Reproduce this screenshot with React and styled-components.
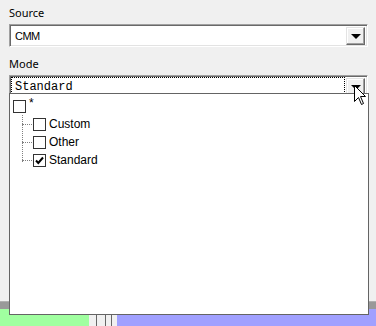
import React from 'react'
import styled, { createGlobalStyle } from 'styled-components'

const Global = createGlobalStyle`
  html, body { margin: 0; padding: 0; }
  body {
    background: #f0f0f0;
    font-family: "Liberation Sans", "DejaVu Sans", sans-serif;
    font-size: 12px;
    color: #000;
  }
`

const Page = styled.div`
  position: relative;
  width: 376px;
  height: 326px;
  overflow: hidden;
  display: flex;
  flex-direction: column;
`

const Form = styled.div`
  display: flex;
  flex-direction: column;
  padding: 5px 8px 0 9px;
  flex: 1;
`

const Label = styled.div`
  font-family: "Noto Sans", "DejaVu Sans", sans-serif;
  font-size: 11px;
  line-height: 15px;
  height: 15px;
  margin-top: ${p => p.top || 0}px;
  margin-bottom: 4px;
`

const Combo = styled.div`
  position: relative;
  height: 23px;
  box-sizing: border-box;
  background: #fff;
  border-top: 1px solid #a0a0a0;
  border-left: 1px solid #a0a0a0;
  border-right: 1px solid #fff;
  border-bottom: 1px solid #fff;
  box-shadow: inset 1px 1px 0 #696969, inset -1px -1px 0 #e3e3e3;
  display: flex;
  align-items: center;
  padding: 2px;
`

const Value = styled.div`
  flex: 1;
  height: 17px;
  box-sizing: border-box;
  display: flex;
  align-items: center;
  padding-left: 3px;
  font-family: ${p => p.mono ? '"Liberation Mono", monospace' : '"Liberation Sans", sans-serif'};
  font-size: ${p => p.mono ? 12 : 11}px;
  letter-spacing: ${p => p.mono ? 0 : -0.5}px;
  outline: ${p => p.focus ? '1px dotted #000' : 'none'};
  margin-right: 2px;
`

const DropButton = styled.div`
  width: 19px;
  height: 18px;
  box-sizing: border-box;
  background: #f0f0f0;
  border-top: 1px solid #e3e3e3;
  border-left: 1px solid #e3e3e3;
  border-right: 1px solid #696969;
  border-bottom: 1px solid #696969;
  box-shadow: inset -1px -1px 0 #a0a0a0, inset 1px 1px 0 #fff;
  display: flex;
  align-items: center;
  justify-content: center;
  &::after {
    content: '';
    width: 0;
    height: 0;
    border-left: 5px solid transparent;
    border-right: 5px solid transparent;
    border-top: 5px solid #000;
    margin-top: 1px;
  }
`

const Popup = styled.div`
  position: absolute;
  left: 9px;
  top: 93px;
  width: 360px;
  height: 222px;
  box-sizing: border-box;
  background: #fff;
  border: 1px solid #646464;
  padding-top: 3px;
  z-index: 2;
`

const Row = styled.div`
  position: relative;
  height: 18px;
  display: flex;
  align-items: center;
  padding-left: ${p => p.indent ? 23 : 3}px;
`

const Branch = styled.div`
  width: 10px;
  height: 0;
  margin-left: -11px;
  margin-right: 1px;
  border-top: 1px dotted #808080;
`

const Box = styled.div`
  width: 13px;
  height: 13px;
  box-sizing: border-box;
  border: 1px solid #333;
  background: #fff;
  display: flex;
  align-items: center;
  justify-content: center;
`

const Text = styled.span`
  margin-left: 3px;
  font-family: "Liberation Sans", sans-serif;
  font-size: 12px;
  line-height: 16px;
  position: relative;
  top: ${p => p.star ? -3 : 0}px;
`

const Trunk = styled.div`
  position: absolute;
  left: 12px;
  top: 21px;
  height: 47px;
  border-left: 1px dotted #808080;
`

const Band = styled.div`
  height: 7px;
  background: #999;
  border-top: 1px solid #b0b0b0;
`

const Strip = styled.div`
  height: 17px;
  display: flex;
`

const Block = styled.div`
  width: ${p => p.w}px;
  flex: ${p => p.grow ? 1 : 'none'};
  background: ${p => p.bg};
  border-left: ${p => p.line ? `${p.line}px solid #666` : 'none'};
`

const Cursor = styled.svg`
  position: absolute;
  left: 354px;
  top: 85px;
  z-index: 3;
`

const Check = () => (
  <svg width="11" height="11" viewBox="0 0 11 11">
    <path d="M2 5.5 L4.3 8 L9 2.5" fill="none" stroke="#000" strokeWidth="2" />
  </svg>
)

const items = [
  { label: 'Custom', checked: false },
  { label: 'Other', checked: false },
  { label: 'Standard', checked: true },
]

export default function App() {
  return (
    <Page>
      <Global />
      <Form>
        <Label>Source</Label>
        <Combo>
          <Value>CMM</Value>
          <DropButton />
        </Combo>
        <Label top={9}>Mode</Label>
        <Combo>
          <Value mono focus>Standard</Value>
          <DropButton />
        </Combo>
      </Form>
      <Band />
      <Strip>
        <Block w={89} bg="#a0ffa0" />
        <Block w={7} bg="#f0f0f0" />
        <Block w={8} bg="#f0f0f0" line={1} />
        <Block w={5} bg="#f0f0f0" line={1} />
        <Block w={5} bg="#f0f0f0" line={1} />
        <Block grow bg="#a0a0ff" />
      </Strip>
      <Popup>
        <Trunk />
        <Row>
          <Box />
          <Text star>*</Text>
        </Row>
        {items.map(it => (
          <Row indent key={it.label}>
            <Branch />
            <Box>{it.checked && <Check />}</Box>
            <Text>{it.label}</Text>
          </Row>
        ))}
      </Popup>
      <Cursor width="13" height="21" viewBox="0 0 13 21">
        <path d="M0.5 0.5 L0.5 16.5 L4.5 12.5 L7.5 19.5 L9.5 18.5 L6.5 11.5 L11.5 11.5 Z" fill="#fff" stroke="#000" strokeWidth="1" />
      </Cursor>
    </Page>
  )
}
